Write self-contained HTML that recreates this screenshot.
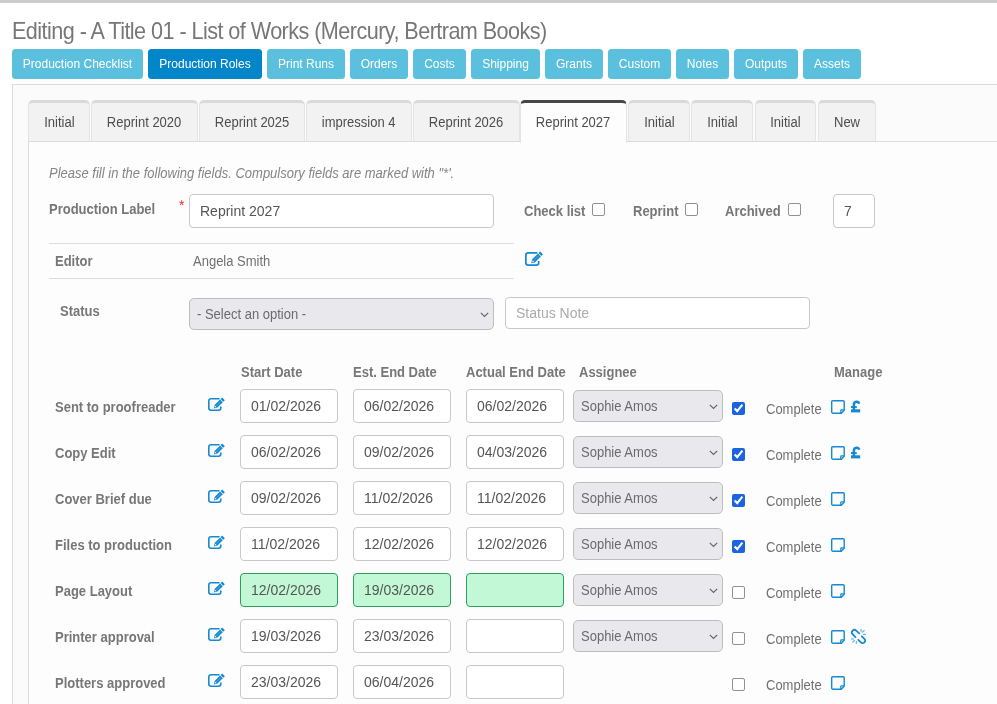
<!DOCTYPE html><html><head><meta charset="utf-8"><title>Editing</title><style>
*{box-sizing:border-box}
html,body{margin:0;padding:0}
body{width:997px;height:704px;overflow:hidden;background:#fff;position:relative;font-family:"Liberation Sans",sans-serif;color:#777}
.abs{position:absolute}
.topbar{left:0;top:0;width:997px;height:3px;background:#cccccc}
h1{position:absolute;margin:0;left:11.9px;top:17px;font-size:24px;line-height:27px;font-weight:normal;color:#777;white-space:nowrap;letter-spacing:-0.61px;transform:scaleX(0.9);transform-origin:0 0}
.btn{position:absolute;top:49px;height:30px;line-height:30px;border-radius:3.5px;background:#5bc0de;color:#fff;font-size:12px;text-align:center;white-space:nowrap}
.btn.dark{background:#0285c9}
.panel{position:absolute;left:12px;top:84px;width:1000px;height:700px;border:1px solid #dcdcdc;border-right:none;background:#fbfbfb}
.tab{position:absolute;top:100px;height:42px;border:1px solid #e4e4e4;border-top:3px solid #dadada;border-bottom:none;border-radius:5px 5px 0 0;background:#f2f2f2;color:#4d4d4d;font-size:13px;text-align:center;line-height:39px;white-space:nowrap}
.tab.active{background:#fdfdfd;border-color:#e4e4e4;border-top:3px solid #474747;color:#4d4d4d;z-index:3;height:43px}
.content{position:absolute;left:28px;top:141px;width:1000px;height:700px;border:1px solid #dcdcdc;border-right:none;background:#fdfdfd;z-index:2}
.t{position:absolute;white-space:nowrap;line-height:16px}
.lbl{font-weight:bold;font-size:14px;color:#777;transform:translateY(-1px) scaleX(0.9286);transform-origin:0 0}
.inp{position:absolute;border:1px solid #c8c8c8;border-radius:4px;background:#fff;font-size:14px;color:#555;line-height:32px;padding-left:10px;white-space:nowrap}
.inp.green{background:#c2f8d6;border-color:#2e9e5e}
.sel{position:absolute;border:1px solid #bdbdbd;border-radius:5px;background:#e9e9ed;font-size:13px;color:#6b6b6b;padding-left:7px;white-space:nowrap}
.sel svg{position:absolute}
.cb{position:absolute;width:13px;height:13px;margin:0;accent-color:#1a64e2}
.cb:not([checked]){-webkit-appearance:none;appearance:none;border:1px solid #8f8f9d;border-radius:2px;background:#fff}
.blue{color:#1589d1}
.n{font-size:14px !important;transform:scaleX(0.9286);transform-origin:0 0}
.nc{display:inline-block;font-size:14px;transform:scaleX(0.9286);transform-origin:50% 50%}
.ns{display:inline-block;font-size:14px;transform:scaleX(0.9286);transform-origin:0 50%}
</style></head><body>
<div style="will-change:transform;position:absolute;left:0;top:0;width:997px;height:704px;overflow:hidden">
<div class="abs topbar"></div>
<h1>Editing - A Title 01 - List of Works (Mercury, Bertram Books)</h1>
<div class="btn" style="left:12px;width:131px">Production Checklist</div>
<div class="btn dark" style="left:148px;width:114px">Production Roles</div>
<div class="btn" style="left:267px;width:78px">Print Runs</div>
<div class="btn" style="left:350px;width:58px">Orders</div>
<div class="btn" style="left:413px;width:53px">Costs</div>
<div class="btn" style="left:471px;width:69px">Shipping</div>
<div class="btn" style="left:545px;width:58px">Grants</div>
<div class="btn" style="left:608px;width:63px">Custom</div>
<div class="btn" style="left:676px;width:53px">Notes</div>
<div class="btn" style="left:734px;width:64px">Outputs</div>
<div class="btn" style="left:803px;width:58px">Assets</div>
<div class="panel"></div>
<div class="tab" style="left:28px;width:62.0px"><span class="nc">Initial</span></div>
<div class="tab" style="left:91px;width:107.0px"><span class="nc">Reprint 2020</span></div>
<div class="tab" style="left:199px;width:106.0px"><span class="nc">Reprint 2025</span></div>
<div class="tab" style="left:306px;width:106.0px"><span class="nc">impression 4</span></div>
<div class="tab" style="left:413px;width:107.0px"><span class="nc">Reprint 2026</span></div>
<div class="tab active" style="left:520px;width:107.0px"><span class="nc">Reprint 2027</span></div>
<div class="tab" style="left:628px;width:62.0px"><span class="nc">Initial</span></div>
<div class="tab" style="left:691px;width:62.0px"><span class="nc">Initial</span></div>
<div class="tab" style="left:755px;width:61.0px"><span class="nc">Initial</span></div>
<div class="tab" style="left:818px;width:58.0px"><span class="nc">New</span></div>
<div class="content"></div>
<div class="abs" style="left:0;top:0;width:997px;height:704px;z-index:4">
<div class="t n" style="left:49px;top:165px;font-style:italic;color:#858585">Please fill in the following fields. Compulsory fields are marked with "*&#39;.</div>
<div class="t lbl" style="left:49px;top:202px">Production Label</div>
<div class="t" style="left:179px;top:197px;font-size:14px;color:#f22">*</div>
<div class="inp" style="left:189px;top:194px;width:305px;height:34px">Reprint 2027</div>
<div class="t lbl" style="left:524px;top:204px">Check list</div>
<input type="checkbox" class="cb" style="left:592px;top:203px">
<div class="t lbl" style="left:633px;top:204px">Reprint</div>
<input type="checkbox" class="cb" style="left:685px;top:203px">
<div class="t lbl" style="left:725px;top:204px">Archived</div>
<input type="checkbox" class="cb" style="left:788px;top:203px">
<div class="inp" style="left:833px;top:194px;width:42px;height:34px">7</div>
<div class="abs" style="left:49px;top:243px;width:465px;height:1px;background:#dddddd"></div>
<div class="abs" style="left:49px;top:278px;width:465px;height:1px;background:#dddddd"></div>
<div class="t lbl" style="left:55px;top:254px">Editor</div>
<div class="t n" style="left:193px;top:253px;color:#707070">Angela Smith</div>
<div class="abs" style="left:525px;top:252px;line-height:0"><svg width="18.2" height="13.9" viewBox="0 0 17 13" style="overflow:visible"><path d="M11.6 0.8 H3 A2.2 2.2 0 0 0 0.8 3 V10 A2.2 2.2 0 0 0 3 12.2 H10.6 A2.2 2.2 0 0 0 12.8 10 V8.4" fill="none" stroke="#1589d1" stroke-width="1.6"/><g transform="translate(6,10.3) rotate(-45)"><path d="M-0.3 0 L3 -1.9 H10.6 V1.9 H3 Z" fill="#1589d1"/><rect x="11.2" y="-1.9" width="2.2" height="3.8" fill="#1589d1"/><path d="M1 0 L2.6 -0.9 V0.9 Z" fill="#fff"/><path d="M3.4 0 H10" stroke="#7cc0ea" stroke-width="0.5"/></g></svg></div>
<div class="t lbl" style="left:60px;top:304px">Status</div>
<div class="sel" style="left:189px;top:298px;width:305px;height:32px;line-height:30px"><span class="ns">- Select an option -</span><span class="abs" style="left:290px;top:13px;line-height:0"><svg width="9" height="6" viewBox="0 0 9 6"><path d="M0.8 0.8 L4.5 4.5 L8.2 0.8" fill="none" stroke="#666" stroke-width="1.2"/></svg></span></div>
<div class="inp" style="left:505px;top:297px;width:305px;height:32px;line-height:30px;color:#aaa;padding-left:10px">Status Note</div>
<div class="t lbl" style="left:241px;top:365px">Start Date</div>
<div class="t lbl" style="left:353px;top:365px">Est. End Date</div>
<div class="t lbl" style="left:466px;top:365px">Actual End Date</div>
<div class="t lbl" style="left:579px;top:365px">Assignee</div>
<div class="t lbl" style="left:833.5px;top:365px">Manage</div>
<div class="t lbl" style="left:55px;top:400px">Sent to proofreader</div>
<div class="abs" style="left:208px;top:398px;line-height:0"><svg width="17" height="13" viewBox="0 0 17 13" style="overflow:visible"><path d="M11.6 0.8 H3 A2.2 2.2 0 0 0 0.8 3 V10 A2.2 2.2 0 0 0 3 12.2 H10.6 A2.2 2.2 0 0 0 12.8 10 V8.4" fill="none" stroke="#1589d1" stroke-width="1.6"/><g transform="translate(6,10.3) rotate(-45)"><path d="M-0.3 0 L3 -1.9 H10.6 V1.9 H3 Z" fill="#1589d1"/><rect x="11.2" y="-1.9" width="2.2" height="3.8" fill="#1589d1"/><path d="M1 0 L2.6 -0.9 V0.9 Z" fill="#fff"/><path d="M3.4 0 H10" stroke="#7cc0ea" stroke-width="0.5"/></g></svg></div>
<div class="inp" style="left:240px;top:389px;width:98px;height:34px">01/02/2026</div>
<div class="inp" style="left:353px;top:389px;width:98px;height:34px">06/02/2026</div>
<div class="inp" style="left:466px;top:389px;width:98px;height:34px">06/02/2026</div>
<div class="sel" style="left:573px;top:390px;width:150px;height:32px;line-height:30px"><span class="ns">Sophie Amos</span><span class="abs" style="left:135px;top:13px;line-height:0"><svg width="9" height="6" viewBox="0 0 9 6"><path d="M0.8 0.8 L4.5 4.5 L8.2 0.8" fill="none" stroke="#666" stroke-width="1.2"/></svg></span></div>
<input type="checkbox" class="cb" style="left:732px;top:402px" checked>
<div class="t n" style="left:766px;top:401px;color:#707070">Complete</div>
<div class="abs" style="left:830.8px;top:400.3px;line-height:0"><svg width="14" height="14" viewBox="0 0 14 14"><path d="M1.8 0.7 H12.1 A1.1 1.1 0 0 1 13.2 1.8 V10.3 L10.3 13.2 H1.8 A1.1 1.1 0 0 1 0.7 12.1 V1.8 A1.1 1.1 0 0 1 1.8 0.7 Z" fill="none" stroke="#1589d1" stroke-width="1.4"/><path d="M13.2 9.8 H10.6 A0.8 0.8 0 0 0 9.8 10.6 V13.2" fill="none" stroke="#1589d1" stroke-width="1.3"/></svg></div>
<div class="abs" style="left:850px;top:400px;line-height:0"><svg width="12" height="14" viewBox="0 0 12 14"><rect x="1" y="9.3" width="9.2" height="3.1" fill="#1589d1"/><rect x="1" y="6.1" width="5.8" height="1.9" fill="#1589d1"/><path d="M3.9 10 V4.6 C3.9 1.1 8.4 0.7 9.2 3.7" fill="none" stroke="#1589d1" stroke-width="2.5"/></svg></div>
<div class="t lbl" style="left:55px;top:446px">Copy Edit</div>
<div class="abs" style="left:208px;top:444px;line-height:0"><svg width="17" height="13" viewBox="0 0 17 13" style="overflow:visible"><path d="M11.6 0.8 H3 A2.2 2.2 0 0 0 0.8 3 V10 A2.2 2.2 0 0 0 3 12.2 H10.6 A2.2 2.2 0 0 0 12.8 10 V8.4" fill="none" stroke="#1589d1" stroke-width="1.6"/><g transform="translate(6,10.3) rotate(-45)"><path d="M-0.3 0 L3 -1.9 H10.6 V1.9 H3 Z" fill="#1589d1"/><rect x="11.2" y="-1.9" width="2.2" height="3.8" fill="#1589d1"/><path d="M1 0 L2.6 -0.9 V0.9 Z" fill="#fff"/><path d="M3.4 0 H10" stroke="#7cc0ea" stroke-width="0.5"/></g></svg></div>
<div class="inp" style="left:240px;top:435px;width:98px;height:34px">06/02/2026</div>
<div class="inp" style="left:353px;top:435px;width:98px;height:34px">09/02/2026</div>
<div class="inp" style="left:466px;top:435px;width:98px;height:34px">04/03/2026</div>
<div class="sel" style="left:573px;top:436px;width:150px;height:32px;line-height:30px"><span class="ns">Sophie Amos</span><span class="abs" style="left:135px;top:13px;line-height:0"><svg width="9" height="6" viewBox="0 0 9 6"><path d="M0.8 0.8 L4.5 4.5 L8.2 0.8" fill="none" stroke="#666" stroke-width="1.2"/></svg></span></div>
<input type="checkbox" class="cb" style="left:732px;top:448px" checked>
<div class="t n" style="left:766px;top:447px;color:#707070">Complete</div>
<div class="abs" style="left:830.8px;top:446.3px;line-height:0"><svg width="14" height="14" viewBox="0 0 14 14"><path d="M1.8 0.7 H12.1 A1.1 1.1 0 0 1 13.2 1.8 V10.3 L10.3 13.2 H1.8 A1.1 1.1 0 0 1 0.7 12.1 V1.8 A1.1 1.1 0 0 1 1.8 0.7 Z" fill="none" stroke="#1589d1" stroke-width="1.4"/><path d="M13.2 9.8 H10.6 A0.8 0.8 0 0 0 9.8 10.6 V13.2" fill="none" stroke="#1589d1" stroke-width="1.3"/></svg></div>
<div class="abs" style="left:850px;top:446px;line-height:0"><svg width="12" height="14" viewBox="0 0 12 14"><rect x="1" y="9.3" width="9.2" height="3.1" fill="#1589d1"/><rect x="1" y="6.1" width="5.8" height="1.9" fill="#1589d1"/><path d="M3.9 10 V4.6 C3.9 1.1 8.4 0.7 9.2 3.7" fill="none" stroke="#1589d1" stroke-width="2.5"/></svg></div>
<div class="t lbl" style="left:55px;top:492px">Cover Brief due</div>
<div class="abs" style="left:208px;top:490px;line-height:0"><svg width="17" height="13" viewBox="0 0 17 13" style="overflow:visible"><path d="M11.6 0.8 H3 A2.2 2.2 0 0 0 0.8 3 V10 A2.2 2.2 0 0 0 3 12.2 H10.6 A2.2 2.2 0 0 0 12.8 10 V8.4" fill="none" stroke="#1589d1" stroke-width="1.6"/><g transform="translate(6,10.3) rotate(-45)"><path d="M-0.3 0 L3 -1.9 H10.6 V1.9 H3 Z" fill="#1589d1"/><rect x="11.2" y="-1.9" width="2.2" height="3.8" fill="#1589d1"/><path d="M1 0 L2.6 -0.9 V0.9 Z" fill="#fff"/><path d="M3.4 0 H10" stroke="#7cc0ea" stroke-width="0.5"/></g></svg></div>
<div class="inp" style="left:240px;top:481px;width:98px;height:34px">09/02/2026</div>
<div class="inp" style="left:353px;top:481px;width:98px;height:34px">11/02/2026</div>
<div class="inp" style="left:466px;top:481px;width:98px;height:34px">11/02/2026</div>
<div class="sel" style="left:573px;top:482px;width:150px;height:32px;line-height:30px"><span class="ns">Sophie Amos</span><span class="abs" style="left:135px;top:13px;line-height:0"><svg width="9" height="6" viewBox="0 0 9 6"><path d="M0.8 0.8 L4.5 4.5 L8.2 0.8" fill="none" stroke="#666" stroke-width="1.2"/></svg></span></div>
<input type="checkbox" class="cb" style="left:732px;top:494px" checked>
<div class="t n" style="left:766px;top:493px;color:#707070">Complete</div>
<div class="abs" style="left:830.8px;top:492.3px;line-height:0"><svg width="14" height="14" viewBox="0 0 14 14"><path d="M1.8 0.7 H12.1 A1.1 1.1 0 0 1 13.2 1.8 V10.3 L10.3 13.2 H1.8 A1.1 1.1 0 0 1 0.7 12.1 V1.8 A1.1 1.1 0 0 1 1.8 0.7 Z" fill="none" stroke="#1589d1" stroke-width="1.4"/><path d="M13.2 9.8 H10.6 A0.8 0.8 0 0 0 9.8 10.6 V13.2" fill="none" stroke="#1589d1" stroke-width="1.3"/></svg></div>
<div class="t lbl" style="left:55px;top:538px">Files to production</div>
<div class="abs" style="left:208px;top:536px;line-height:0"><svg width="17" height="13" viewBox="0 0 17 13" style="overflow:visible"><path d="M11.6 0.8 H3 A2.2 2.2 0 0 0 0.8 3 V10 A2.2 2.2 0 0 0 3 12.2 H10.6 A2.2 2.2 0 0 0 12.8 10 V8.4" fill="none" stroke="#1589d1" stroke-width="1.6"/><g transform="translate(6,10.3) rotate(-45)"><path d="M-0.3 0 L3 -1.9 H10.6 V1.9 H3 Z" fill="#1589d1"/><rect x="11.2" y="-1.9" width="2.2" height="3.8" fill="#1589d1"/><path d="M1 0 L2.6 -0.9 V0.9 Z" fill="#fff"/><path d="M3.4 0 H10" stroke="#7cc0ea" stroke-width="0.5"/></g></svg></div>
<div class="inp" style="left:240px;top:527px;width:98px;height:34px">11/02/2026</div>
<div class="inp" style="left:353px;top:527px;width:98px;height:34px">12/02/2026</div>
<div class="inp" style="left:466px;top:527px;width:98px;height:34px">12/02/2026</div>
<div class="sel" style="left:573px;top:528px;width:150px;height:32px;line-height:30px"><span class="ns">Sophie Amos</span><span class="abs" style="left:135px;top:13px;line-height:0"><svg width="9" height="6" viewBox="0 0 9 6"><path d="M0.8 0.8 L4.5 4.5 L8.2 0.8" fill="none" stroke="#666" stroke-width="1.2"/></svg></span></div>
<input type="checkbox" class="cb" style="left:732px;top:540px" checked>
<div class="t n" style="left:766px;top:539px;color:#707070">Complete</div>
<div class="abs" style="left:830.8px;top:538.3px;line-height:0"><svg width="14" height="14" viewBox="0 0 14 14"><path d="M1.8 0.7 H12.1 A1.1 1.1 0 0 1 13.2 1.8 V10.3 L10.3 13.2 H1.8 A1.1 1.1 0 0 1 0.7 12.1 V1.8 A1.1 1.1 0 0 1 1.8 0.7 Z" fill="none" stroke="#1589d1" stroke-width="1.4"/><path d="M13.2 9.8 H10.6 A0.8 0.8 0 0 0 9.8 10.6 V13.2" fill="none" stroke="#1589d1" stroke-width="1.3"/></svg></div>
<div class="t lbl" style="left:55px;top:584px">Page Layout</div>
<div class="abs" style="left:208px;top:582px;line-height:0"><svg width="17" height="13" viewBox="0 0 17 13" style="overflow:visible"><path d="M11.6 0.8 H3 A2.2 2.2 0 0 0 0.8 3 V10 A2.2 2.2 0 0 0 3 12.2 H10.6 A2.2 2.2 0 0 0 12.8 10 V8.4" fill="none" stroke="#1589d1" stroke-width="1.6"/><g transform="translate(6,10.3) rotate(-45)"><path d="M-0.3 0 L3 -1.9 H10.6 V1.9 H3 Z" fill="#1589d1"/><rect x="11.2" y="-1.9" width="2.2" height="3.8" fill="#1589d1"/><path d="M1 0 L2.6 -0.9 V0.9 Z" fill="#fff"/><path d="M3.4 0 H10" stroke="#7cc0ea" stroke-width="0.5"/></g></svg></div>
<div class="inp green" style="left:240px;top:573px;width:98px;height:34px">12/02/2026</div>
<div class="inp green" style="left:353px;top:573px;width:98px;height:34px">19/03/2026</div>
<div class="inp green" style="left:466px;top:573px;width:98px;height:34px"></div>
<div class="sel" style="left:573px;top:574px;width:150px;height:32px;line-height:30px"><span class="ns">Sophie Amos</span><span class="abs" style="left:135px;top:13px;line-height:0"><svg width="9" height="6" viewBox="0 0 9 6"><path d="M0.8 0.8 L4.5 4.5 L8.2 0.8" fill="none" stroke="#666" stroke-width="1.2"/></svg></span></div>
<input type="checkbox" class="cb" style="left:732px;top:586px">
<div class="t n" style="left:766px;top:585px;color:#707070">Complete</div>
<div class="abs" style="left:830.8px;top:584.3px;line-height:0"><svg width="14" height="14" viewBox="0 0 14 14"><path d="M1.8 0.7 H12.1 A1.1 1.1 0 0 1 13.2 1.8 V10.3 L10.3 13.2 H1.8 A1.1 1.1 0 0 1 0.7 12.1 V1.8 A1.1 1.1 0 0 1 1.8 0.7 Z" fill="none" stroke="#1589d1" stroke-width="1.4"/><path d="M13.2 9.8 H10.6 A0.8 0.8 0 0 0 9.8 10.6 V13.2" fill="none" stroke="#1589d1" stroke-width="1.3"/></svg></div>
<div class="t lbl" style="left:55px;top:630px">Printer approval</div>
<div class="abs" style="left:208px;top:628px;line-height:0"><svg width="17" height="13" viewBox="0 0 17 13" style="overflow:visible"><path d="M11.6 0.8 H3 A2.2 2.2 0 0 0 0.8 3 V10 A2.2 2.2 0 0 0 3 12.2 H10.6 A2.2 2.2 0 0 0 12.8 10 V8.4" fill="none" stroke="#1589d1" stroke-width="1.6"/><g transform="translate(6,10.3) rotate(-45)"><path d="M-0.3 0 L3 -1.9 H10.6 V1.9 H3 Z" fill="#1589d1"/><rect x="11.2" y="-1.9" width="2.2" height="3.8" fill="#1589d1"/><path d="M1 0 L2.6 -0.9 V0.9 Z" fill="#fff"/><path d="M3.4 0 H10" stroke="#7cc0ea" stroke-width="0.5"/></g></svg></div>
<div class="inp" style="left:240px;top:619px;width:98px;height:34px">19/03/2026</div>
<div class="inp" style="left:353px;top:619px;width:98px;height:34px">23/03/2026</div>
<div class="inp" style="left:466px;top:619px;width:98px;height:34px"></div>
<div class="sel" style="left:573px;top:620px;width:150px;height:32px;line-height:30px"><span class="ns">Sophie Amos</span><span class="abs" style="left:135px;top:13px;line-height:0"><svg width="9" height="6" viewBox="0 0 9 6"><path d="M0.8 0.8 L4.5 4.5 L8.2 0.8" fill="none" stroke="#666" stroke-width="1.2"/></svg></span></div>
<input type="checkbox" class="cb" style="left:732px;top:632px">
<div class="t n" style="left:766px;top:631px;color:#707070">Complete</div>
<div class="abs" style="left:830.8px;top:630.3px;line-height:0"><svg width="14" height="14" viewBox="0 0 14 14"><path d="M1.8 0.7 H12.1 A1.1 1.1 0 0 1 13.2 1.8 V10.3 L10.3 13.2 H1.8 A1.1 1.1 0 0 1 0.7 12.1 V1.8 A1.1 1.1 0 0 1 1.8 0.7 Z" fill="none" stroke="#1589d1" stroke-width="1.4"/><path d="M13.2 9.8 H10.6 A0.8 0.8 0 0 0 9.8 10.6 V13.2" fill="none" stroke="#1589d1" stroke-width="1.3"/></svg></div>
<div class="abs" style="left:848px;top:626px;line-height:0"><svg width="22" height="20" viewBox="0 0 22 20"><g fill="none" stroke="#1589d1" stroke-width="1.75" stroke-linecap="round"><path d="M11.2 7.4 L8.2 4.6 A2.45 2.45 0 0 0 4.6 8.2 L7.4 11.2"/><path d="M13.8 10.3 L16.4 12.9 A2.45 2.45 0 0 1 12.9 16.4 L10.3 13.8"/></g><g stroke="#6dbbe9" stroke-width="1.3" stroke-linecap="butt"><path d="M13.1 3 V5.8" stroke-width="1.9" stroke="#9ccfef"/><path d="M14.2 6.5 L16.5 4.3"/><path d="M15 8.4 H17.9"/><path d="M3 12.9 H6" stroke-width="1.9" stroke="#9ccfef"/><path d="M4.3 16.5 L6.8 14.2"/><path d="M8.4 15 V17.9"/></g></svg></div>
<div class="t lbl" style="left:55px;top:676px">Plotters approved</div>
<div class="abs" style="left:208px;top:674px;line-height:0"><svg width="17" height="13" viewBox="0 0 17 13" style="overflow:visible"><path d="M11.6 0.8 H3 A2.2 2.2 0 0 0 0.8 3 V10 A2.2 2.2 0 0 0 3 12.2 H10.6 A2.2 2.2 0 0 0 12.8 10 V8.4" fill="none" stroke="#1589d1" stroke-width="1.6"/><g transform="translate(6,10.3) rotate(-45)"><path d="M-0.3 0 L3 -1.9 H10.6 V1.9 H3 Z" fill="#1589d1"/><rect x="11.2" y="-1.9" width="2.2" height="3.8" fill="#1589d1"/><path d="M1 0 L2.6 -0.9 V0.9 Z" fill="#fff"/><path d="M3.4 0 H10" stroke="#7cc0ea" stroke-width="0.5"/></g></svg></div>
<div class="inp" style="left:240px;top:665px;width:98px;height:34px">23/03/2026</div>
<div class="inp" style="left:353px;top:665px;width:98px;height:34px">06/04/2026</div>
<div class="inp" style="left:466px;top:665px;width:98px;height:34px"></div>
<input type="checkbox" class="cb" style="left:732px;top:678px">
<div class="t n" style="left:766px;top:677px;color:#707070">Complete</div>
<div class="abs" style="left:830.8px;top:676.3px;line-height:0"><svg width="14" height="14" viewBox="0 0 14 14"><path d="M1.8 0.7 H12.1 A1.1 1.1 0 0 1 13.2 1.8 V10.3 L10.3 13.2 H1.8 A1.1 1.1 0 0 1 0.7 12.1 V1.8 A1.1 1.1 0 0 1 1.8 0.7 Z" fill="none" stroke="#1589d1" stroke-width="1.4"/><path d="M13.2 9.8 H10.6 A0.8 0.8 0 0 0 9.8 10.6 V13.2" fill="none" stroke="#1589d1" stroke-width="1.3"/></svg></div>
</div>
</div>
</body></html>
